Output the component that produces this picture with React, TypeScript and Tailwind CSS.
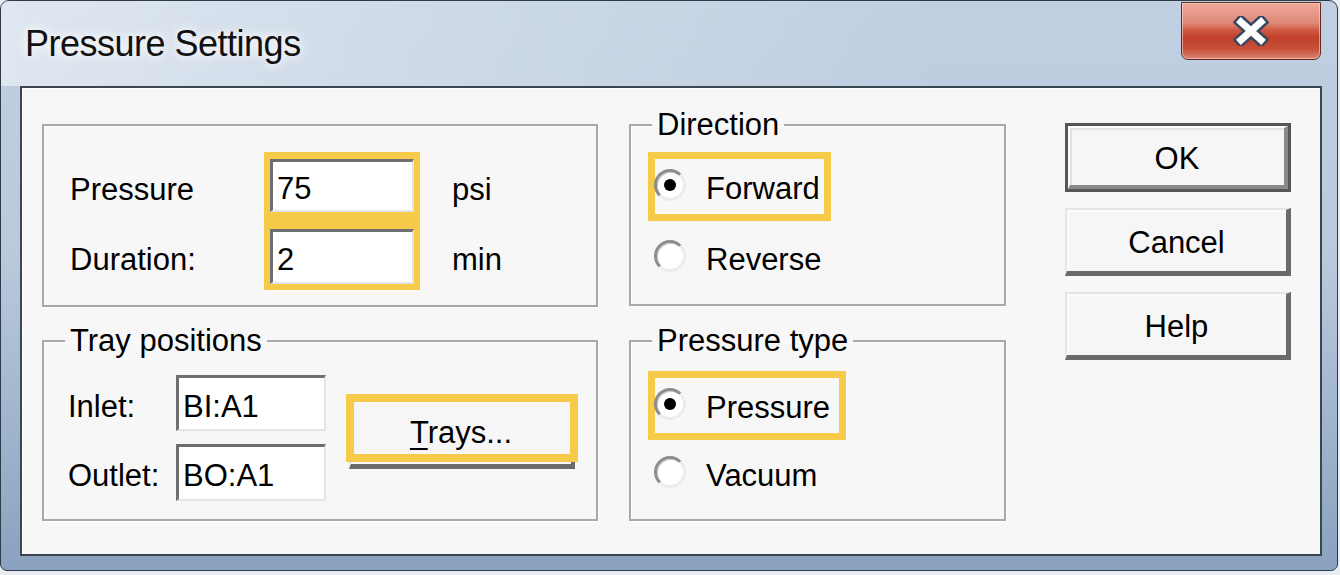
import type { ReactNode } from "react";

const FONT = "font-['Liberation_Sans',Arial,sans-serif]";

function Sunken({ value, className }: { value: string; className: string }) {
  return (
    <div
      className={`flex items-center bg-white border-t-[3px] border-l-[3px] border-t-[#6f6f6f] border-l-[#6f6f6f] border-b-2 border-r-2 border-b-[#e4e4e4] border-r-[#e4e4e4] pl-[4px] pt-[5px] text-[31px] leading-none text-black ${className}`}
    >
      {value}
    </div>
  );
}

function Radio({ checked }: { checked?: boolean }) {
  return (
    <div className="flex h-[32px] w-[32px] shrink-0 items-center justify-center rounded-full bg-white border-[3px] border-t-[#8c8c8c] border-l-[#8c8c8c] border-b-[#ececec] border-r-[#ececec] shadow-[inset_1px_1px_0_#d0d0d0]">
      {checked && <div className="h-[12px] w-[12px] rounded-full bg-black" />}
    </div>
  );
}

function RadioRow({
  label,
  checked,
  highlight,
  width,
  height,
}: {
  label: string;
  checked?: boolean;
  highlight?: boolean;
  width: string;
  height: string;
}) {
  return (
    <div
      className={`flex items-center border-[7px] ${
        highlight ? "border-[#f6cb4b]" : "border-transparent"
      } ${width} ${height}`}
    >
      <div className="-ml-[1px] -mt-[3px]">
        <Radio checked={checked} />
      </div>
      <span className="ml-[20px] pt-[4px] text-[31px] leading-none">{label}</span>
    </div>
  );
}

function Group({
  legend,
  className,
  children,
}: {
  legend: string;
  className: string;
  children: ReactNode;
}) {
  return (
    <fieldset
      className={`border-2 border-[#a8a8a8] shadow-[inset_1px_1px_0_#fff,1px_1px_0_#fff] ${className}`}
    >
      <legend className="ml-[21px] px-[5px] text-[31px] leading-[36px]">{legend}</legend>
      {children}
    </fieldset>
  );
}

function DlgButton({ label, isDefault }: { label: string; isDefault?: boolean }) {
  if (isDefault) {
    return (
      <div className="h-[69px] w-[226px] border-[3px] border-[#565656]">
        <div className="flex h-full w-full items-center justify-center bg-[#f6f6f6] border-t-2 border-l-2 border-t-[#fdfdfd] border-l-[#fdfdfd] border-b-[4px] border-r-[4px] border-b-[#8a8a8a] border-r-[#8a8a8a] shadow-[inset_2px_2px_0_#e2e2e2] text-[31px] leading-none pt-[3px]">
          {label}
        </div>
      </div>
    );
  }
  return (
    <div className="flex h-[68px] w-[226px] items-center justify-center bg-[#f6f6f6] border-t-2 border-l-2 border-t-[#e6e6e6] border-l-[#e6e6e6] border-b-[5px] border-r-[5px] border-b-[#6a6a6a] border-r-[#6a6a6a] shadow-[inset_2px_2px_0_#fbfbfb] text-[31px] leading-none pt-[3px]">
      {label}
    </div>
  );
}

export default function App() {
  return (
    <div className={`h-[575px] w-[1340px] overflow-hidden bg-[#e9edf2] text-black ${FONT}`}>
      <div className="flex h-[571px] w-[1338px] flex-col rounded-t-[9px] rounded-b-[7px] border border-[#2e3b4b] bg-[linear-gradient(180deg,#c0cfe1_0%,#bac9dc_45%,#9fb4cd_75%,#8aa2bf_100%)]">
        {/* title bar */}
        <div className="flex h-[85px] items-start justify-between rounded-t-[8px] bg-[linear-gradient(90deg,rgba(236,241,247,0.7)_0%,rgba(222,231,241,0.5)_30%,rgba(190,205,222,0.1)_70%,rgba(170,188,210,0)_100%)]">
          <div className="pl-[24px] pt-[21px] text-[36px] leading-[44px] tracking-[-0.5px] text-[#111] [text-shadow:0_0_8px_#fff,0_0_14px_rgba(255,255,255,0.9)]">
            Pressure Settings
          </div>
          <div className="mr-[16px] mt-[1px] flex h-[58px] w-[140px] items-center justify-center rounded-b-[7px] border border-[#5e2a22] bg-[linear-gradient(180deg,#eeaa9c_0%,#e08a78_35%,#cf5a43_48%,#c2402a_62%,#c8503a_82%,#dc8574_100%)] shadow-[inset_0_0_0_1px_rgba(255,220,210,0.55)]">
            <svg width="36" height="30" viewBox="0 0 36 30">
              <path d="M8 6 L28 24 M28 6 L8 24" stroke="#3a4760" strokeWidth="12" strokeLinecap="square" fill="none" />
              <path d="M8 6 L28 24 M28 6 L8 24" stroke="#ffffff" strokeWidth="7" strokeLinecap="square" fill="none" />
            </svg>
          </div>
        </div>

        {/* client area */}
        <div className="ml-[19px] h-[470px] w-[1302px] border-2 border-[#3b4650] shadow-[inset_1px_1px_0_#fff] bg-[#f7f7f7]">
          <div className="flex items-start pl-[20px]">
            {/* left column */}
            <div className="flex w-[556px] flex-col">
              <div className="mt-[36px] flex h-[183px] items-start border-2 border-[#a8a8a8] pl-[26px] pt-[26px] shadow-[inset_1px_1px_0_#fff,1px_1px_0_#fff]">
                <div className="flex w-[194px] flex-col gap-[17px] pt-[7px] text-[31px] leading-none">
                  <div className="flex h-[53px] items-center pt-[8px]">Pressure</div>
                  <div className="flex h-[53px] items-center pt-[8px]">Duration:</div>
                </div>
                <div className="flex w-[156px] flex-col gap-[17px] bg-[#f6cb4b] p-[6px] pt-[7px]">
                  <Sunken value="75" className="h-[53px] w-[144px]" />
                  <Sunken value="2" className="h-[55px] w-[144px]" />
                </div>
                <div className="ml-[32px] flex flex-col gap-[17px] pt-[7px] text-[31px] leading-none">
                  <div className="flex h-[53px] items-center pt-[8px]">psi</div>
                  <div className="flex h-[53px] items-center pt-[8px]">min</div>
                </div>
              </div>

              <Group legend="Tray positions" className="mt-[16px] h-[198px]">
                <div className="flex items-start pl-[24px] pt-[16px]">
                  <div className="grid grid-cols-[108px_150px] gap-y-[13px] text-[31px] leading-none">
                    <div className="flex h-[56px] items-center pt-[6px]">Inlet:</div>
                    <Sunken value="BI:A1" className="h-[56px] w-[150px]" />
                    <div className="flex h-[57px] items-center pt-[6px]">Outlet:</div>
                    <Sunken value="BO:A1" className="h-[57px] w-[150px]" />
                  </div>
                  <div className="relative ml-[23px] mt-[22px]">
                    <div className="flex h-[72px] w-[226px] items-center justify-center bg-[#f6f6f6] border-t-2 border-l-2 border-t-[#e6e6e6] border-l-[#e6e6e6] border-b-[5px] border-r-[4px] border-b-[#6a6a6a] border-r-[#6a6a6a] text-[31px] leading-none pt-[2px]">
                      <span>
                        <span className="underline decoration-2 underline-offset-[5px]">T</span>rays...
                      </span>
                    </div>
                    <div className="pointer-events-none absolute -left-[3px] -right-[3px] -top-[3px] bottom-[7px] border-[8px] border-[#f6cb4b]" />
                  </div>
                </div>
              </Group>
            </div>

            {/* middle column */}
            <div className="ml-[31px] flex w-[377px] flex-col">
              <Group legend="Direction" className="mt-[19px] h-[199px]">
                <div className="ml-[17px] mt-[9px] flex flex-col">
                  <RadioRow label="Forward" checked highlight width="w-[183px]" height="h-[69px]" />
                  <RadioRow label="Reverse" width="w-[183px]" height="h-[72px]" />
                </div>
              </Group>
              <Group legend="Pressure type" className="mt-[17px] h-[198px]">
                <div className="ml-[17px] mt-[12px] flex flex-col">
                  <RadioRow label="Pressure" checked highlight width="w-[198px]" height="h-[69px]" />
                  <RadioRow label="Vacuum" width="w-[198px]" height="h-[66px]" />
                </div>
              </Group>
            </div>

            {/* buttons */}
            <div className="ml-[59px] mt-[35px] flex flex-col gap-[16px]">
              <DlgButton label="OK" isDefault />
              <DlgButton label="Cancel" />
              <DlgButton label="Help" />
            </div>
          </div>
        </div>
      </div>
    </div>
  );
}
